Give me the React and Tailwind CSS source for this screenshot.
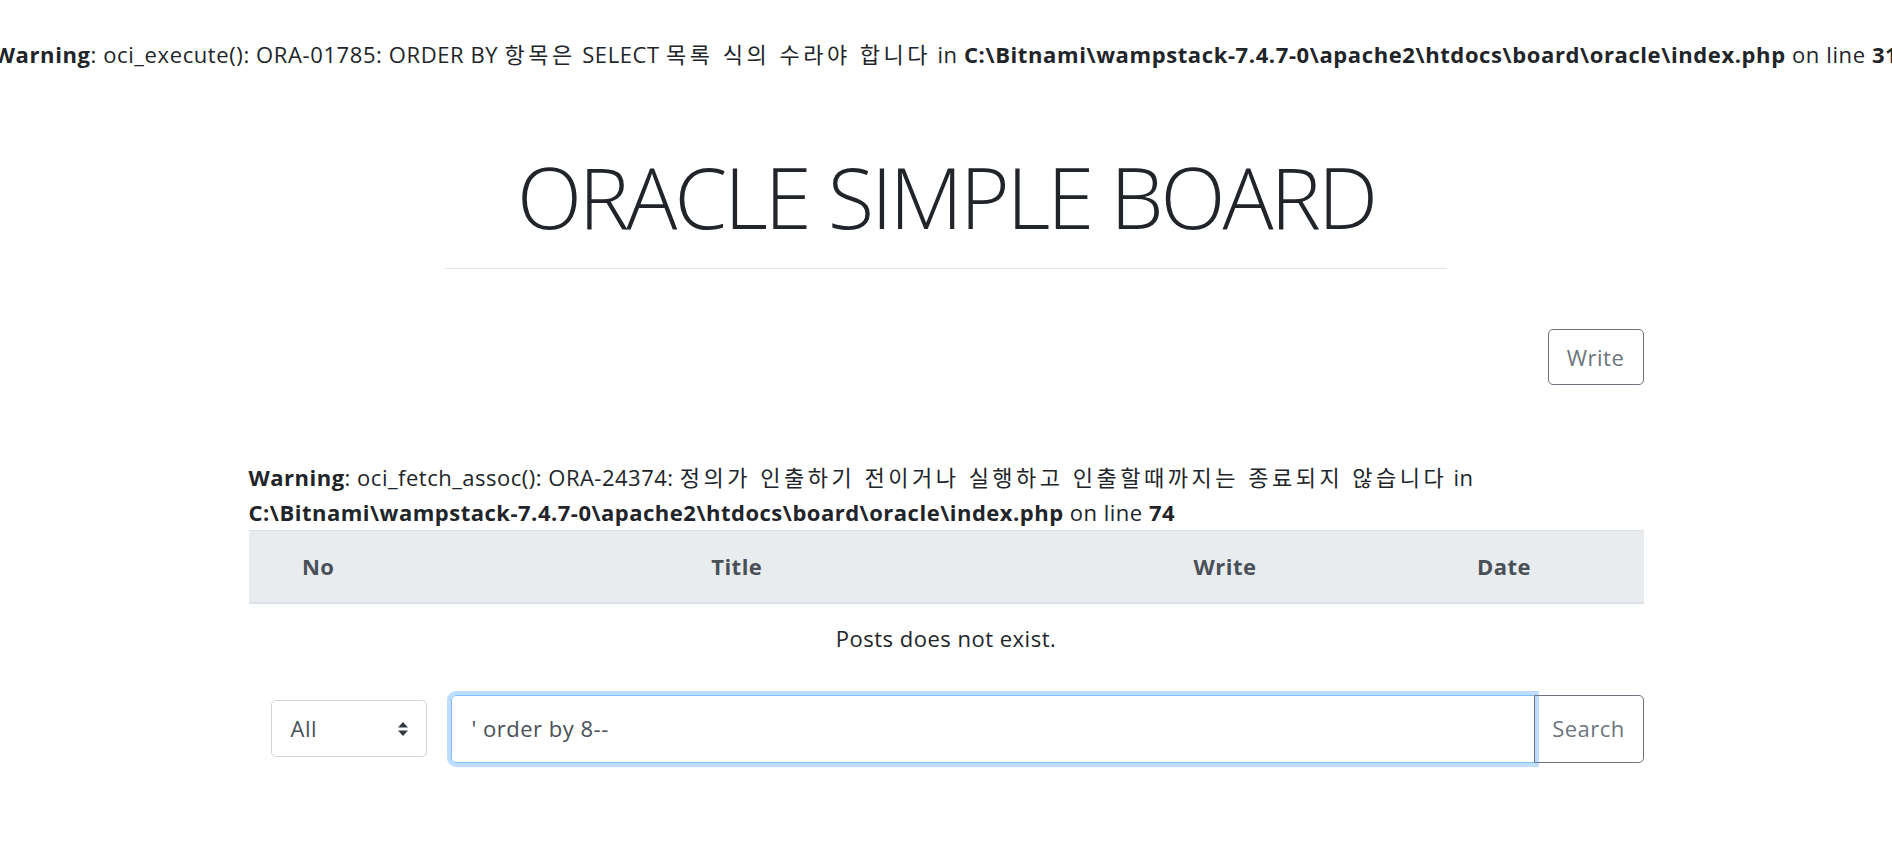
import React from 'react';

const font = "font-['Open_Sans','Noto_Sans_CJK_KR',sans-serif]";

// korean glyphs in the original are spaced wider than the latin text
const Ko = ({ children }) => <span className="tracking-[3.5px]">{children}</span>;

const SortArrows = () => (
    <svg width="10" height="14" viewBox="0 0 10 14" className="fill-[#343a40]">
        <path d="M5 0 L10 5.5 H0 Z" />
        <path d="M5 14 L0 8.5 H10 Z" />
    </svg>
);

const App = () => {
    return (
        <div className={`min-h-screen bg-white text-[#212529] text-[22px] tracking-[0.5px] ${font}`}>
            {/* php warning printed before the page */}
            <div className="flex justify-center overflow-hidden whitespace-nowrap pt-[39px] leading-[30px] tracking-[0.6px]">
                <span className="shrink-0">
                    <b>Warning</b>: oci_execute(): ORA-01785: ORDER BY <Ko>항목은</Ko> SELECT <Ko>목록 식의 수라야 합니다</Ko> in{' '}
                    <b>C:\Bitnami\wampstack-7.4.7-0\apache2\htdocs\board\oracle\index.php</b> on line <b>31</b>
                </span>
            </div>

            <header className="mx-auto w-[1002px] mt-[76px]">
                <h1 className="text-center font-light text-[85px] leading-[1.2] tracking-[-3px]">ORACLE SIMPLE BOARD</h1>
                <hr className="mt-[21px] border-0 border-t border-black/10" />
            </header>

            <main className="mx-auto w-[1395px]">
                <div className="flex justify-end pt-[60px]">
                    <button className="h-[56px] w-[96px] rounded-[5px] border border-[#6c757d] text-[#6c757d]">
                        Write
                    </button>
                </div>

                <div className="mt-[75px] leading-[35px]">
                    <b>Warning</b>: oci_fetch_assoc(): ORA-24374: <Ko>정의가 인출하기 전이거나 실행하고 인출할때까지는 종료되지 않습니다</Ko> in
                    <br />
                    <b>C:\Bitnami\wampstack-7.4.7-0\apache2\htdocs\board\oracle\index.php</b> on line <b>74</b>
                </div>

                <table className="w-full border-collapse">
                    <thead>
                        <tr className="bg-[#e9ecef] border-t border-[#dee2e6] border-b-2 text-[#495057]">
                            <th className="w-[10%] h-[72px] font-bold text-center">No</th>
                            <th className="w-[50%] font-bold text-center">Title</th>
                            <th className="w-[20%] font-bold text-center">Write</th>
                            <th className="w-[20%] font-bold text-center">Date</th>
                        </tr>
                    </thead>
                    <tbody>
                        <tr>
                            <td colSpan={4} className="h-[70px] text-center">Posts does not exist.</td>
                        </tr>
                    </tbody>
                </table>

                <form className="mt-[22px] flex items-center pl-[22px]">
                    <div className="flex h-[57px] w-[156px] items-center justify-between rounded-[5px] border border-[#ced4da] pl-[19px] pr-[18px] text-[#495057]">
                        <span>All</span>
                        <SortArrows />
                    </div>
                    <div className="ml-[24px] flex flex-1 items-stretch">
                        <div className="flex h-[68px] flex-1 items-center rounded-l-[5px] border border-[#80bdff] pl-[20px] text-[#495057] ring-4 ring-[#007bff]/25">
                            ' order by 8--
                        </div>
                        <button type="button" className="-ml-px h-[68px] w-[110px] rounded-r-[5px] border border-[#6c757d] text-[#6c757d]">
                            Search
                        </button>
                    </div>
                </form>
            </main>
        </div>
    );
};

export default App;
